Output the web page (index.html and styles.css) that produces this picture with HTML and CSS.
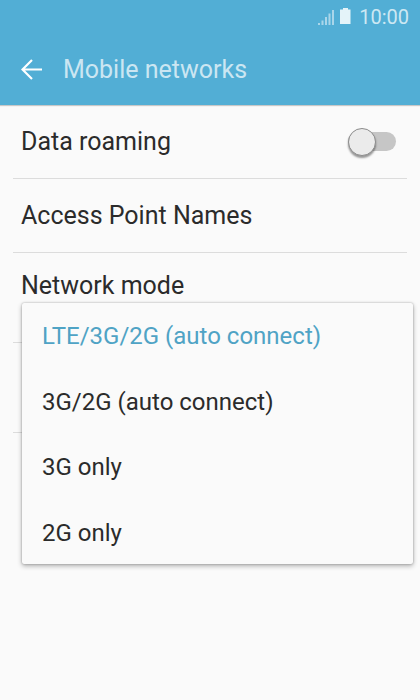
FILE: index.html
```html
<!DOCTYPE html>
<html lang="en">

<head>
    <meta charset="UTF-8">
    <meta name="viewport" content="width=device-width, initial-scale=1.0">
    <title>Mobile networks</title>
    <link rel="stylesheet" href="styles.css">
</head>

<body>
    <div id="header">
        <div id="statusBar">
            <svg class="signal" width="17" height="16" viewBox="0 0 17 16">
                <path d="M0 14h2v2h-2z M3.5 11.5h2v4.500h-2z M7 8h2v8h-2z M10.500 4.500h2v11.500h-2z M14 1h2v15h-2z" />
            </svg>
            <svg class="battery" width="11" height="16" viewBox="0 0 11 16">
                <path d="M3 0h5v1.500h2.500v14.500h-10.500v-14.500h3z" />
            </svg>
            <span id="clock">10:00</span>
        </div>
        <div id="titleBar">
            <svg class="back" width="21" height="21" viewBox="0 0 21 21">
                <path d="M21 10.500H2 M11 1L1.500 10.500L11 20" />
            </svg>
            <h1>Mobile networks</h1>
        </div>
    </div>

    <ul id="settings">
        <li class="item">
            <span>Data roaming</span>
            <div class="switch">
                <div class="thumb"></div>
            </div>
        </li>
        <li class="item">
            <span>Access Point Names</span>
        </li>
        <li class="item tall">
            <span>Network mode</span>
            <!-- opens over the list -->
            <ul id="modeMenu">
                <li class="selected">LTE/3G/2G (auto connect)</li>
                <li>3G/2G (auto connect)</li>
                <li>3G only</li>
                <li>2G only</li>
            </ul>
        </li>
        <li class="item tall"></li>
    </ul>
</body>

</html>
```

FILE: styles.css
```css
* {
    box-sizing: border-box;
}

body {
    margin: 0;
    height: 700px;
    background: #fafafa;
    color: #2b2b2b;
    font-family: Roboto, sans-serif;
    font-size: 25px;
    overflow: hidden;
}

ul {
    margin: 0;
    padding: 0;
    list-style: none;
}

#header {
    height: 105px;
    background: #52aed5;
    box-shadow: 0 1px 1px rgba(0, 0, 0, 0.2);
}

#statusBar {
    display: flex;
    justify-content: flex-end;
    align-items: center;
    height: 33px;
    padding-right: 11px;
    color: #cde8f3;
}

.signal {
    margin-right: 5px;
    fill: #a9d6ea;
}

.battery {
    margin-right: 8px;
    margin-bottom: 2px;
    fill: #e4f3f9;
}

#clock {
    font-size: 20px;
}

#titleBar {
    display: flex;
    align-items: center;
    height: 72px;
    padding-left: 21px;
}

.back {
    fill: none;
    stroke: #fff;
    stroke-width: 2.2;
}

#titleBar h1 {
    margin: 0 0 0 21px;
    color: #cbe6f2;
    font-size: 25px;
    font-weight: 400;
}

#settings {
    padding: 0 13px;
}

.item {
    position: relative;
    display: flex;
    justify-content: space-between;
    align-items: center;
    height: 74px;
    padding: 0 11px 0 8px;
    border-bottom: 1px solid #dcdcdc;
}

.item.tall {
    align-items: flex-start;
    height: 90px;
    padding-top: 18px;
}

.switch {
    display: flex;
    align-items: center;
    width: 48px;
    height: 19px;
    border-radius: 10px;
    background: #c6c6c6;
}

.thumb {
    width: 28px;
    height: 28px;
    border: 1px solid #8c8c8c;
    border-radius: 50%;
    background: #ebebeb;
    box-shadow: 0 2px 2px rgba(0, 0, 0, 0.4);
}

#modeMenu {
    position: absolute;
    top: 50px;
    left: 9px;
    z-index: 1;
    width: 391px;
    height: 261px;
    border-radius: 2px;
    background: #fafafa;
    box-shadow: 0 0 2px rgba(0, 0, 0, 0.3), 0 2px 5px rgba(0, 0, 0, 0.3);
    font-size: 24px;
}

#modeMenu li {
    height: 65.500px;
    padding-left: 20px;
    line-height: 66px;
}

#modeMenu .selected {
    color: #4fa3c5;
}
```
